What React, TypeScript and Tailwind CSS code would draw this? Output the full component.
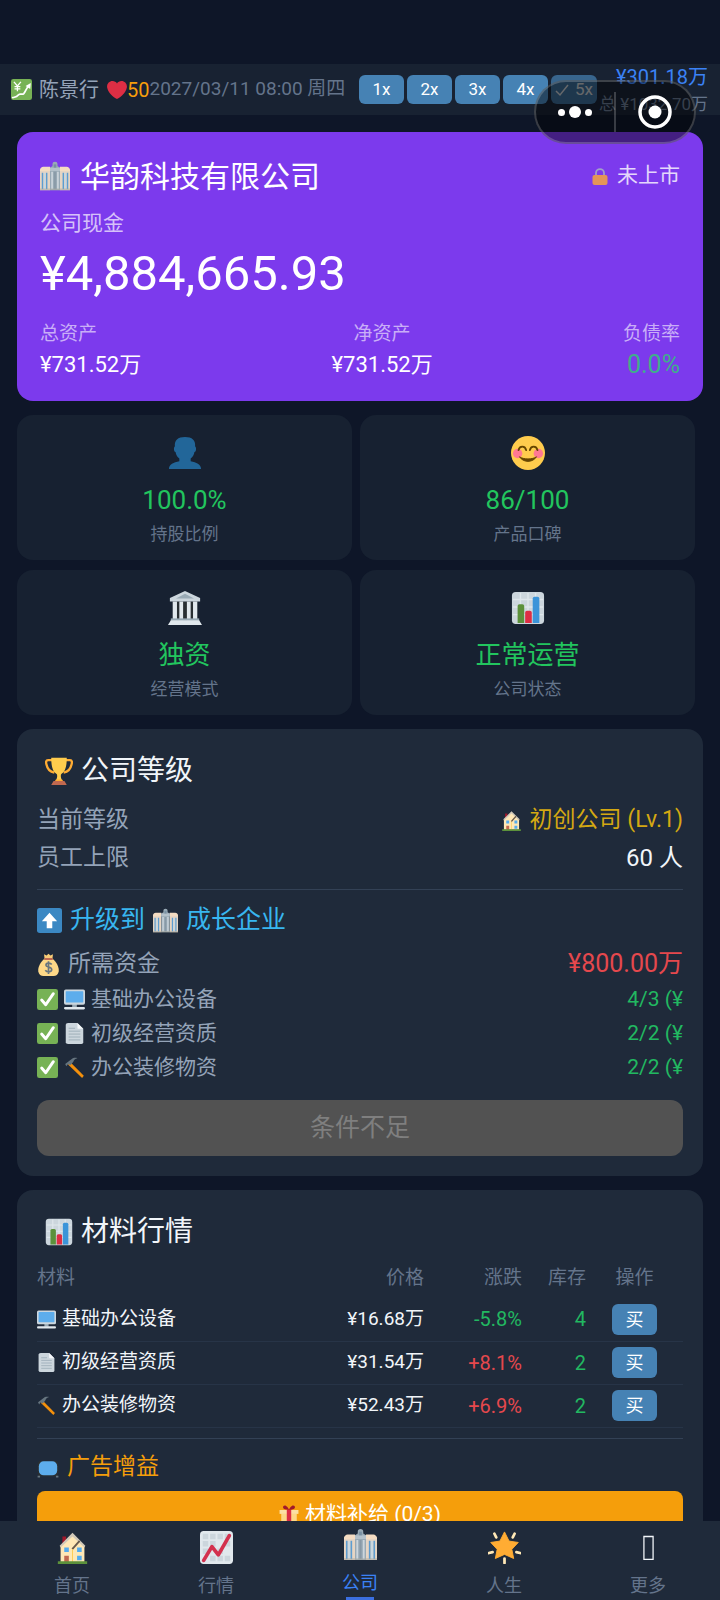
import type { ReactNode } from "react";

type IconName = keyof typeof art;

const art = {
  yenChart: (
    <>
      <rect width="36" height="36" rx="4" fill="#77B255" />
      <path d="M5 5l6 7 6-7M11 12v9M6 13h10M6 17h10" fill="none" stroke="#fff" strokeWidth="2.2" />
      <path d="M3 32c5-1 7-1 10-5 3-3 6 1 9-2 3-4 4-8 8-13" fill="none" stroke="#fff" strokeWidth="3" strokeLinecap="round" />
      <path d="M25 12l9-5-1 10z" fill="#fff" />
    </>
  ),
  heart: (
    <path
      fill="#DD2E44"
      d="M35.885 11.833c0-5.45-4.418-9.868-9.867-9.868-3.308 0-6.227 1.633-8.018 4.129-1.791-2.496-4.71-4.129-8.017-4.129-5.45 0-9.868 4.417-9.868 9.868 0 .772.098 1.52.266 2.241C1.751 22.587 11.216 31.568 18 34.034c6.783-2.466 16.249-11.447 17.617-19.959.17-.721.268-1.469.268-2.242z"
    />
  ),
  office: (
    <>
      <path d="M0 12c0-2 2-4 4-4h8v27H0zM24 8h8c2 0 4 2 4 4v23H24z" fill="#E6D5C3" />
      <path d="M0 11c0-2 2-4 4-4h8v5H0zM24 7h8c2 0 4 2 4 4v1H24z" fill="#F4DCC2" />
      <path d="M3 14v20M8 14v20M28 14v20M33 14v20" stroke="#5C9DD1" strokeWidth="1.800" />
      <path d="M5.500 14v20M30.500 14v20" stroke="#BFD8EA" strokeWidth="1.500" />
      <path d="M12 8l3-2V4c0-2 1-3 3-3s3 1 3 3v2l3 2v27H12z" fill="#99AAB5" />
      <path d="M12 8h12v4H12z" fill="#B4C1CA" />
      <path d="M14.500 13v21M21.500 13v21" stroke="#CCD6DD" strokeWidth="2" />
      <path d="M18 13v21" stroke="#8899A6" strokeWidth="2" />
      <path d="M16.500 4h3v4h-3z" fill="#7890A2" />
      <path d="M0 33h36v2H0z" fill="#AAA79F" fillOpacity=".55" />
    </>
  ),
  lock: (
    <>
      <path d="M10 18v-6a8 8 0 0 1 16 0v6" fill="none" stroke="#AAB8C2" strokeWidth="3.500" />
      <rect x="3" y="16" width="30" height="20" rx="4" fill="#FFAC33" />
    </>
  ),
  person: (
    <path
      fill="#269"
      d="M24 26.800v-2.900c2.200-1.600 3.500-4.200 4-6.900 1.200-.2 1.700-2 1.700-3.300 0-1.100-.2-2.400-1-2.700C29.500 4.500 25.500 1 18 1S6.500 4.500 7.300 11c-.8.300-1 1.600-1 2.700 0 1.300.5 3.100 1.700 3.300.5 2.700 1.800 5.300 4 6.900v2.900C6 28 1 30 1 35h34c0-5-5-7-11-8.200z"
    />
  ),
  smile: (
    <>
      <circle cx="18" cy="18" r="18" fill="#FFCC4D" />
      <circle cx="7" cy="18.500" r="5" fill="#FF7892" />
      <circle cx="29" cy="18.500" r="5" fill="#FF7892" />
      <path d="M8 15c1-5 7-5 8 0M20 15c1-5 7-5 8 0" fill="none" stroke="#664500" strokeWidth="2" strokeLinecap="round" />
      <path d="M9 22c4 6.500 14 6.500 18 0-4 3-14 3-18 0z" fill="#664500" stroke="#664500" strokeWidth="1" strokeLinejoin="round" />
    </>
  ),
  bank: (
    <>
      <path d="M5 11h26v20H5z" fill="#292F33" />
      <path d="M5 11h4.500v20H5zM12 11h4v20h-4zM20 11h4v20h-4zM26.500 11H31v20h-4.500z" fill="#E1E8ED" />
      <path d="M18 0l16 7.500V11H2V7.500z" fill="#CCD6DD" />
      <path d="M18 3l9.500 5h-19z" fill="#99AAB5" />
      <path d="M3 29h30v2.500H3z" fill="#99AAB5" />
      <path d="M3 31h30l3 5H0z" fill="#E1E8ED" />
    </>
  ),
  bars: (
    <>
      <rect x="1" y="1" width="34" height="34" rx="4" fill="#CCD6DD" />
      <path d="M2 9h32M2 17h32M2 25h32M10 2v32M18 2v32M26 2v32" stroke="#DFE7EC" strokeWidth="1.500" />
      <path d="M7 16q0-2 2-2h3q2 0 2 2v18H7z" fill="#5C913B" />
      <path d="M15 23q0-2 2-2h3q2 0 2 2v11h-7z" fill="#DD2E44" />
      <path d="M23 8q0-2 2-2h3q2 0 2 2v26h-7z" fill="#3B94D9" />
    </>
  ),
  trophy: (
    <>
      <path d="M10 4H4C1 4 1 7 2 10c1 5 4 9 10 10M26 4h6c3 0 3 3 2 6-1 5-4 9-10 10" fill="none" stroke="#FFAC33" strokeWidth="3" />
      <path d="M8 1h20c0 14-3 18-7 21-1 1-1 5 1 8h-8c2-3 2-7 1-8C11 19 8 15 8 1z" fill="#FFCC4D" />
      <path d="M14 29h8l2 3H12z" fill="#FFAC33" />
      <path d="M11 31h14l3 5H8z" fill="#C1694F" />
    </>
  ),
  house: (
    <>
      <path d="M7 6h4v10H7z" fill="#A0192B" />
      <path d="M18 4l13 13v17H5V17z" fill="#FFE8B6" />
      <path d="M18 2L4 16l1 2L18 6l13 12 1-2z" fill="#D1C9B9" />
      <path d="M25 10l-8 9 1.500 1.500 8-9z" fill="#66584B" />
      <path d="M18 20v14" stroke="#FFCC4D" />
      <path d="M9 18h5v5H9zM23 18h5v5h-5zM23 27h5v5h-5z" fill="#55ACEE" />
      <path d="M9 27h5v7H9z" fill="#C1694F" />
      <path d="M2 33h32v3H2z" fill="#5C913B" />
    </>
  ),
  up: (
    <>
      <rect width="36" height="36" rx="4" fill="#3B88C3" />
      <path d="M18 7l11 12h-7v10h-8V19H7z" fill="#fff" />
    </>
  ),
  money: (
    <>
      <path d="M11 2l4 2 3-3 3 3 4-2-1 8H12z" fill="#F9CD77" />
      <path d="M12 9h12c6 4 11 13 10 20-1 5-4 7-8 7H10c-4 0-7-2-8-7C1 22 6 13 12 9z" fill="#FDD888" />
      <path d="M12 8h12l1 3H11z" fill="#BF6952" />
      <path d="M23 18c-2-3-9-3-9 1s9 2 9 7-8 4-10 1M18 13v20" fill="none" stroke="#67757F" strokeWidth="2.600" />
    </>
  ),
  check: (
    <>
      <rect width="36" height="36" rx="4" fill="#77B255" />
      <path d="M8 19l7 8L28 8" fill="none" stroke="#fff" strokeWidth="5" strokeLinecap="round" strokeLinejoin="round" />
    </>
  ),
  computer: (
    <>
      <path d="M14 25h8v7h-8z" fill="#99AAB5" />
      <rect y="1" width="36" height="26" rx="3" fill="#CCD6DD" />
      <rect x="3" y="4" width="30" height="19" rx="1" fill="#5DADEC" />
      <rect y="31" width="36" height="4" rx="2" fill="#E1E8ED" />
    </>
  ),
  page: (
    <>
      <path d="M7 0h16l10 10v23q0 3-3 3H7q-4 0-4-3V3q0-3 4-3z" fill="#CCD6DD" />
      <path d="M23 0l10 10h-8q-2 0-2-2z" fill="#F5F8FA" />
      <path d="M8 9h11M8 14h20M8 19h20M8 24h20M8 29h20" stroke="#99AAB5" strokeWidth="1.500" />
    </>
  ),
  hammer: (
    <>
      <path d="M11 9l23 23-3 4L7 13z" fill="#F4900C" />
      <path d="M2 12L15 2c3-1 6-1 8 0-4 1-6 3-7 6l-5 6-4-2-3 4z" fill="#66757F" />
    </>
  ),
  tv: (
    <>
      <rect x="1" y="6" width="34" height="26" rx="6" fill="#292F33" />
      <rect x="3" y="7" width="30" height="23" rx="8" fill="#5DADEC" />
      <path d="M1 32h4M31 32h4" stroke="#66757F" strokeWidth="3" />
    </>
  ),
  gift: (
    <>
      <path d="M4 15h28v20H4z" fill="#FDD888" />
      <path d="M1 9h34v7H1z" fill="#FCE0A4" />
      <path d="M14 8h8v28h-8z" fill="#DD2E44" />
      <path d="M18 9C12 9 5 7 8 2c3-4 9 2 10 7 1-5 7-11 10-7 3 5-4 7-10 7z" fill="#A0192B" />
    </>
  ),
  trend: (
    <>
      <rect width="36" height="36" rx="4" fill="#E1E8ED" />
      <path d="M3 3h6v6H3zM19 3h6v6h-6zM11 11h6v6h-6zM27 11h6v6h-6zM3 19h6v6H3zM19 19h6v6h-6zM11 27h6v6h-6zM27 27h6v6h-6zM11 3h6v6h-6zM27 3h6v6h-6zM3 11h6v6H3zM19 27h6v6h-6z" fill="#CCD6DD" />
      <path d="M4 32l9-15 7 9L32 5" fill="none" stroke="#D3314E" strokeWidth="4" strokeLinecap="round" strokeLinejoin="round" />
    </>
  ),
  star: (
    <>
      <path d="M18 30v5M7 3l2 4M29 3l-2 4M1 24l4-1M35 24l-4-1" stroke="#FFE8B6" strokeWidth="3" strokeLinecap="round" />
      <path d="M18 1l5 10 10 1.500-7 7.500 2 10-10-4.500L8 30l2-10-7-7.500L13 11z" fill="#FFAC33" stroke="#FFAC33" strokeWidth="1" strokeLinejoin="round" />
    </>
  ),
  box: <path d="M13 6h10v25H13z" fill="none" stroke="#F1F5F9" strokeWidth="1.400" />,
};

function Icon({ name, className }: { name: IconName; className: string }) {
  return (
    <svg viewBox="0 0 36 36" className={`shrink-0 ${className}`} aria-hidden="true">
      {art[name]}
    </svg>
  );
}

function StatusBar() {
  return (
    <header className="relative shrink-0 pt-16">
      <div className="flex h-[51px] items-center whitespace-nowrap bg-[#182232] pl-[11px] pr-3">
        <Icon name="yenChart" className="size-[21px]" />
        <span className="ml-[7px] text-[20px] text-[#94a3b8]">陈景行</span>
        <Icon name="heart" className="ml-2 size-5" />
        <span className="text-[20px] text-[#f59e0b]">50</span>
        <time className="text-[19px] text-[#64748b]">2027/03/11 08:00 周四</time>
        <div className="ml-auto flex gap-[3px]">
          {["1x", "2x", "3x", "4x"].map((s) => (
            <button key={s} type="button" className="h-[29px] w-[45px] rounded-md bg-[#4682b4] text-[17px] text-white">
              {s}
            </button>
          ))}
          <button
            type="button"
            aria-pressed="true"
            className="flex h-[29px] w-[46px] items-center justify-center gap-1.5 rounded-md bg-[#4682b4] text-[17px] text-white opacity-70"
          >
            <svg viewBox="0 0 14 14" className="size-3.5" aria-hidden="true">
              <path d="M1 8l4 4 8-10" fill="none" stroke="currentColor" strokeWidth="1.500" />
            </svg>
            5x
          </button>
        </div>
        <div className="flex shrink-0 flex-col items-end pl-0.5">
          <span className="text-[20px] leading-7 text-[#3b82f6]">¥301.18万</span>
          <span className="text-[17px] leading-[26px] text-[#64748b]">总 ¥1032.70万</span>
        </div>
      </div>
      <div className="absolute right-6 top-20 z-10 flex h-16 w-[162px] items-center rounded-full border-2 border-white/20 bg-black/45">
        <button type="button" aria-label="更多操作" className="flex flex-1 items-center justify-center gap-1">
          <span className="size-[7px] rounded-full bg-white" />
          <span className="size-3 rounded-full bg-white" />
          <span className="size-[7px] rounded-full bg-white" />
        </button>
        <span className="h-10 w-0.5 bg-white/20" />
        <button type="button" aria-label="关闭" className="flex flex-1 items-center justify-center">
          <svg viewBox="0 0 34 34" className="size-[34px]" aria-hidden="true">
            <circle cx="17" cy="17" r="15" fill="none" stroke="#fff" strokeWidth="3.500" />
            <circle cx="17" cy="17" r="6.500" fill="#fff" />
          </svg>
        </button>
      </div>
    </header>
  );
}

function CompanyCard() {
  return (
    <section className="rounded-2xl bg-[#7c3aed] px-[23px] py-5 text-white">
      <div className="flex h-12 items-center">
        <Icon name="office" className="size-[30px]" />
        <h1 className="ml-2.5 text-[30px]">华韵科技有限公司</h1>
        <span className="ml-auto flex items-center gap-2 text-[21px] opacity-80">
          <Icon name="lock" className="size-[18px]" />
          未上市
        </span>
      </div>
      <p className="text-[21px] leading-[46px] text-white/70">公司现金</p>
      <p className="text-[49px] leading-[56px]">¥4,884,665.93</p>
      <dl className="mt-4 flex justify-between text-[22px] leading-[32px]">
        <div>
          <dt className="text-[19px] leading-[31px] text-white/60">总资产</dt>
          <dd>¥731.52万</dd>
        </div>
        <div className="text-center">
          <dt className="text-[19px] leading-[31px] text-white/60">净资产</dt>
          <dd>¥731.52万</dd>
        </div>
        <div className="text-right">
          <dt className="text-[19px] leading-[31px] text-white/60">负债率</dt>
          <dd className="text-[25px] text-[#3fae8c]">0.0%</dd>
        </div>
      </dl>
    </section>
  );
}

const stats: { icon: IconName; value: string; label: string }[] = [
  { icon: "person", value: "100.0%", label: "持股比例" },
  { icon: "smile", value: "86/100", label: "产品口碑" },
  { icon: "bank", value: "独资", label: "经营模式" },
  { icon: "bars", value: "正常运营", label: "公司状态" },
];

function Card({ icon, title, children }: { icon: IconName; title: string; children: ReactNode }) {
  return (
    <section className="mt-3.5 rounded-2xl bg-[#1f2a3a] p-5">
      <h2 className="flex h-11 items-center gap-2 pl-2 text-[28px] text-[#f1f5f9]">
        <Icon name={icon} className="size-7" />
        {title}
      </h2>
      {children}
    </section>
  );
}

const requirements: { icon: IconName; name: string; have: string }[] = [
  { icon: "computer", name: "基础办公设备", have: "4/3 (¥" },
  { icon: "page", name: "初级经营资质", have: "2/2 (¥" },
  { icon: "hammer", name: "办公装修物资", have: "2/2 (¥" },
];

function LevelCard() {
  return (
    <Card icon="trophy" title="公司等级">
      <div className="mt-2 flex justify-between text-[23px] leading-[38px]">
        <span className="text-[#94a3b8]">当前等级</span>
        <span className="flex items-center gap-2 text-[#d4a812]">
          <Icon name="house" className="size-[21px]" />
          初创公司 (Lv.1)
        </span>
      </div>
      <div className="flex justify-between text-[23px] leading-[38px]">
        <span className="text-[#94a3b8]">员工上限</span>
        <span className="text-[24px] text-[#f1f5f9]">60 人</span>
      </div>
      <hr className="mt-3 border-[#334155]" />
      <h3 className="mt-3 flex h-9 items-center gap-2 text-[25px] text-[#38b6f0]">
        <Icon name="up" className="size-[25px]" />
        升级到
        <Icon name="office" className="size-[25px]" />
        成长企业
      </h3>
      <div className="mt-2 flex h-9 items-center text-[23px]">
        <Icon name="money" className="size-[23px]" />
        <span className="ml-2 text-[#94a3b8]">所需资金</span>
        <span className="ml-auto text-[25px] text-[#e5484d]">¥800.00万</span>
      </div>
      <ul className="text-[21px] leading-[34px]">
        {requirements.map((r) => (
          <li key={r.name} className="flex items-center gap-1.5">
            <Icon name="check" className="size-[21px]" />
            <Icon name={r.icon} className="size-[21px]" />
            <span className="text-[#94a3b8]">{r.name}</span>
            <span className="ml-auto text-[#22b861]">{r.have}</span>
          </li>
        ))}
      </ul>
      <button type="button" disabled className="mt-4 h-14 w-full rounded-xl bg-[#525252] text-[25px] text-[#7f7f7f]">
        条件不足
      </button>
    </Card>
  );
}

const materials: { icon: IconName; name: string; price: string; change: string; stock: number }[] = [
  { icon: "computer", name: "基础办公设备", price: "¥16.68万", change: "-5.8%", stock: 4 },
  { icon: "page", name: "初级经营资质", price: "¥31.54万", change: "+8.1%", stock: 2 },
  { icon: "hammer", name: "办公装修物资", price: "¥52.43万", change: "+6.9%", stock: 2 },
];

function MarketCard() {
  return (
    <Card icon="bars" title="材料行情">
      <table className="mt-1 w-full table-fixed border-collapse whitespace-nowrap text-right text-[19px]">
        <thead>
          <tr className="h-10 text-[#64748b]">
            <th className="text-left font-normal">材料</th>
            <th className="w-[140px] font-normal">价格</th>
            <th className="w-[98px] font-normal">涨跌</th>
            <th className="w-16 font-normal">库存</th>
            <th className="w-[97px] text-center font-normal">操作</th>
          </tr>
        </thead>
        <tbody>
          {materials.map((m) => (
            <tr key={m.name} className="h-[43px] border-b border-[#273447]">
              <td className="text-[#f1f5f9]">
                <span className="flex items-center gap-1.5">
                  <Icon name={m.icon} className="size-[19px]" />
                  {m.name}
                </span>
              </td>
              <td className="text-[#f1f5f9]">{m.price}</td>
              <td className={m.change.startsWith("-") ? "text-[20px] text-[#22b861]" : "text-[20px] text-[#e5484d]"}>
                {m.change}
              </td>
              <td className="text-[20px] text-[#22b861]">{m.stock}</td>
              <td>
                <button
                  type="button"
                  aria-label={`买 ${m.name}`}
                  className="mx-auto block h-[31px] w-[45px] rounded-md bg-[#4682b4] text-[18px] text-white"
                >
                  买
                </button>
              </td>
            </tr>
          ))}
        </tbody>
      </table>
      <hr className="mt-2.5 border-[#334155]" />
      <h3 className="mt-3 flex h-[34px] items-center gap-2 text-[23px] text-[#f59e0b]">
        <Icon name="tv" className="size-[22px]" />
        广告增益
      </h3>
      <button
        type="button"
        className="mt-1.5 flex h-12 w-full items-center justify-center gap-1.5 rounded-lg bg-[#f59e0b] text-[21px] text-white"
      >
        <Icon name="gift" className="size-5" />
        材料补给 (0/3)
      </button>
    </Card>
  );
}

const tabs: { icon: IconName; label: string; active?: boolean }[] = [
  { icon: "house", label: "首页" },
  { icon: "trend", label: "行情" },
  { icon: "office", label: "公司", active: true },
  { icon: "star", label: "人生" },
  { icon: "box", label: "更多" },
];

export default function App() {
  return (
    <div className="flex h-screen flex-col bg-[#0e1628] font-[Roboto,'Noto_Sans_CJK_SC',sans-serif]" lang="zh-CN">
      <StatusBar />
      <main className="min-h-0 flex-1 overflow-y-auto px-[17px] py-[17px] [scrollbar-width:none]">
        <CompanyCard />
        <div className="mr-2 mt-3.5 grid grid-cols-2 gap-x-2 gap-y-2.5">
          {stats.map((s) => (
            <section key={s.label} className="flex flex-col items-center rounded-2xl bg-[#172131] pb-3 pt-[21px]">
              <Icon name={s.icon} className="size-[34px]" />
              <p className="mt-2.5 text-[26px] leading-10 text-[#22c55e]">{s.value}</p>
              <p className="text-[17px] leading-7 text-[#64748b]">{s.label}</p>
            </section>
          ))}
        </div>
        <LevelCard />
        <MarketCard />
      </main>
      <nav className="grid h-[79px] shrink-0 grid-cols-5 bg-[#1f2a3a]">
        {tabs.map((t) => (
          <a
            key={t.label}
            href={`#${t.icon}`}
            aria-current={t.active ? "page" : undefined}
            className={`flex flex-col items-center justify-end text-[18px] leading-7 ${t.active ? "text-[#3b82f6]" : "text-[#64748b]"}`}
          >
            <Icon name={t.icon} className="mb-2 size-[33px]" />
            {t.label}
            {t.active && <span className="h-[3px] w-7 bg-[#3b6fe0]" />}
          </a>
        ))}
      </nav>
    </div>
  );
}
